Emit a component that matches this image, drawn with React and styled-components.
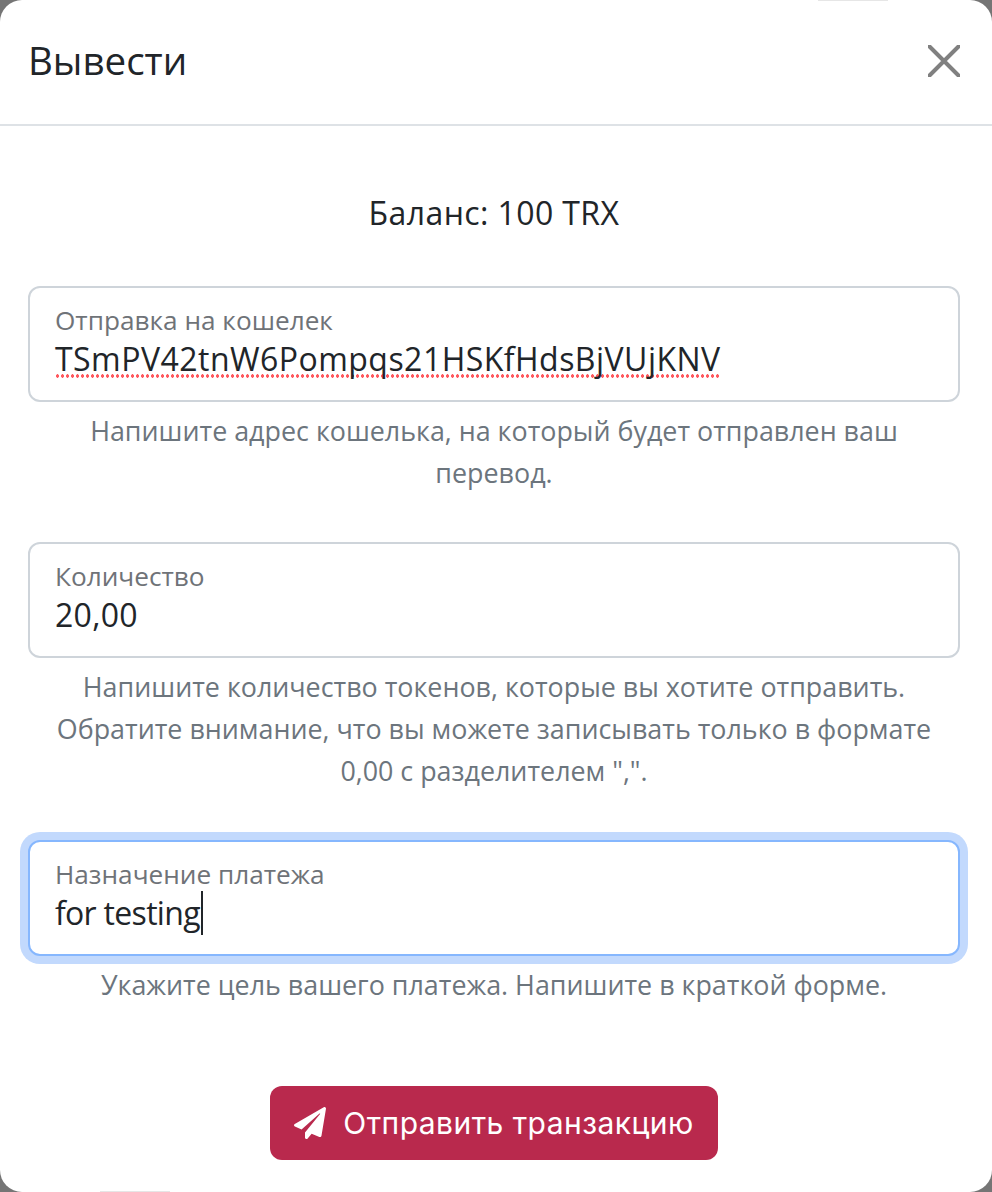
import React from "react";
import styled, { createGlobalStyle } from "styled-components";
import { FaPaperPlane } from "react-icons/fa";

const Global = createGlobalStyle`
  html, body { margin: 0; padding: 0; background: #757575; }
  * { box-sizing: border-box; }
`;
const Modal = styled.div`
  position: relative; width: 992px; height: 1192px; background: #fff; border-radius: 22px;
  overflow: hidden; font-family: "Open Sans", "Noto Sans", sans-serif; color: #212529;
  display: flex; flex-direction: column;
`;
const Header = styled.header`
  height: 126px; border-bottom: 2px solid #dee2e6; display: flex; align-items: center;
  justify-content: space-between; padding: 0 32px 2px 28px;
`;
const Title = styled.h1`margin: 0 0 2px; font-size: 38.5px; font-weight: 400; line-height: 46px;`;
const Close = styled.button`
  border: 0; background: none; padding: 0; width: 32px; height: 32px; display: block;
  svg { display: block; }
`;
const Body = styled.main`
  padding: 66px 32px 0 28px; display: flex; flex-direction: column; flex: 1;
`;
const Balance = styled.p`
  margin: 0 0 52px; text-align: center; font-size: 32px; line-height: 42px; letter-spacing: 0.4px;
`;
const Field = styled.div`margin-bottom: ${p => p.$gap}px;`;
const Box = styled.div`
  height: 116px; border: 2px solid ${p => (p.$focus ? "#86b7fe" : "#ced4da")}; border-radius: 12px;
  padding: 15px 25px 0; box-shadow: ${p => (p.$focus ? "0 0 0 8px #c2d9fd" : "none")}; background: #fff;
`;
const Label = styled.div`font-size: 26.2px; line-height: 34px; color: #6f7378;`;
const Value = styled.div`
  font-size: 32px; line-height: 44px; color: #212529; white-space: nowrap; display: flex; align-items: center;
  letter-spacing: ${p => p.$track || 0}px;
`;
const Spell = styled.span`
  display: inline-block; line-height: 44px;
  background: radial-gradient(circle at 50% 50%, #ff5a5f 1.5px, transparent 1.9px) left calc(100% - 3px) / 5px 4px repeat-x;
`;
const Caret = styled.span`display: inline-block; width: 2px; height: 44px; background: #212529; margin-left: 1px;`;
const Help = styled.p`
  margin: 8px 0 0; padding: 0 24px; text-align: center; font-size: 26.85px; line-height: 42px; color: #6c757d;
`;
const Submit = styled.button`
  align-self: center; width: 448px; height: 74px; border: 0; border-radius: 12px;
  background: #b9294d; color: #fff; font-family: "Inter", "Open Sans", sans-serif; font-size: 30px;
  letter-spacing: 0.45px; display: flex; align-items: center; justify-content: center; gap: 17px; padding: 0;
`;
const Sliver = styled.i`
  position: absolute; left: ${p => p.$x}px; ${p => p.$side}: 0; width: 70px; height: 1px; background: #e6e6e6;
`;

export default function App() {
  return (
    <>
      <Global />
      <Modal>
        <Sliver $x={818} $side="top" />
        <Sliver $x={100} $side="bottom" />
        <Header>
          <Title>Вывести</Title>
          <Close aria-label="Закрыть">
            <svg width="32" height="32" viewBox="0 0 32 32" fill="none">
              <path d="M1.5 1.5 30.5 30.5M30.5 1.5 1.5 30.5" stroke="#808080" strokeWidth="4" strokeLinecap="round" />
            </svg>
          </Close>
        </Header>
        <Body>
          <Balance>Баланс: 100 TRX</Balance>
          <Field $gap={48}>
            <Box>
              <Label>Отправка на кошелек</Label>
              <Value $track={0.47}><Spell>TSmPV42tnW6Pompqs21HSKfHdsBjVUjKNV</Spell></Value>
            </Box>
            <Help>Напишите адрес кошелька, на который будет отправлен ваш перевод.</Help>
          </Field>
          <Field $gap={48}>
            <Box>
              <Label>Количество</Label>
              <Value $track={0.3}>20,00</Value>
            </Box>
            <Help>Напишите количество токенов, которые вы хотите отправить. Обратите внимание, что вы можете записывать только в формате 0,00 с разделителем ",".</Help>
          </Field>
          <Field $gap={80}>
            <Box $focus>
              <Label>Назначение платежа</Label>
              <Value $track={-0.7}>for testing<Caret /></Value>
            </Box>
            <Help>Укажите цель вашего платежа. Напишите в краткой форме.</Help>
          </Field>
          <Submit>
            <FaPaperPlane size={32} />
            Отправить транзакцию
          </Submit>
        </Body>
      </Modal>
    </>
  );
}
